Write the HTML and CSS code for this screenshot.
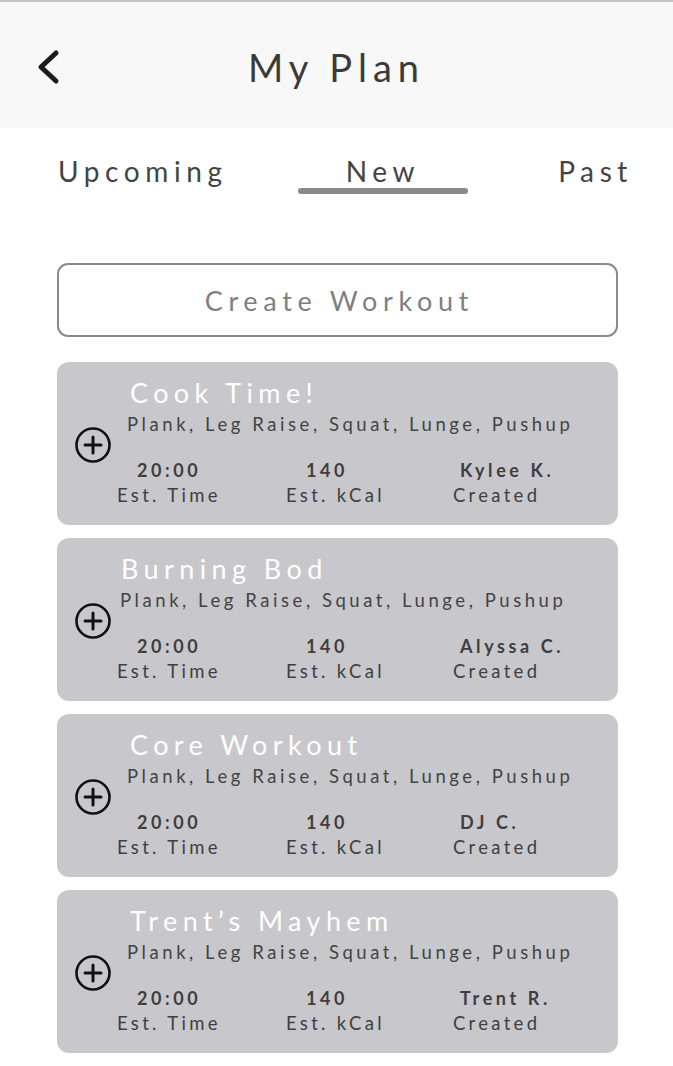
FILE: index.html
```html
<!DOCTYPE html>
<html lang="en">
<head>
<meta charset="utf-8">
<title>My Plan</title>
<link rel="stylesheet" href="styles.css">
</head>
<body>
<div class="app">
  <header class="topbar">
    <button class="back" aria-label="Back">
      <svg width="28" height="36" viewBox="0 0 28 36"><path d="M22 4 L7 18 L22 32" fill="none" stroke="#1c1c1c" stroke-width="5" stroke-linecap="round" stroke-linejoin="round"/></svg>
    </button>
    <h1 class="title">My Plan</h1>
  </header>

  <nav class="tabs">
    <div class="tab">Upcoming</div>
    <div class="tab tab-active">New</div>
    <div class="tab">Past</div>
  </nav>

  <main class="content">
    <button class="create">Create Workout</button>

    <div class="card">
      <svg class="plus" width="38" height="38" viewBox="0 0 38 38"><circle cx="19" cy="19" r="16.5" fill="none" stroke="#111" stroke-width="2.6"/><path d="M19 11 V27 M11 19 H27" stroke="#111" stroke-width="3" stroke-linecap="round"/></svg>
      <div class="card-body">
        <div class="card-title">Cook Time!</div>
        <div class="card-sub">Plank, Leg Raise, Squat, Lunge, Pushup</div>
        <div class="stats">
          <div class="stat"><div class="stat-val">20:00</div><div class="stat-lbl">Est. Time</div></div>
          <div class="stat"><div class="stat-val">140</div><div class="stat-lbl">Est. kCal</div></div>
          <div class="stat"><div class="stat-val">Kylee K.</div><div class="stat-lbl">Created</div></div>
        </div>
      </div>
    </div>

    <div class="card card-shift">
      <svg class="plus" width="38" height="38" viewBox="0 0 38 38"><circle cx="19" cy="19" r="16.5" fill="none" stroke="#111" stroke-width="2.6"/><path d="M19 11 V27 M11 19 H27" stroke="#111" stroke-width="3" stroke-linecap="round"/></svg>
      <div class="card-body">
        <div class="card-title">Burning Bod</div>
        <div class="card-sub">Plank, Leg Raise, Squat, Lunge, Pushup</div>
        <div class="stats">
          <div class="stat"><div class="stat-val">20:00</div><div class="stat-lbl">Est. Time</div></div>
          <div class="stat"><div class="stat-val">140</div><div class="stat-lbl">Est. kCal</div></div>
          <div class="stat"><div class="stat-val">Alyssa C.</div><div class="stat-lbl">Created</div></div>
        </div>
      </div>
    </div>

    <div class="card">
      <svg class="plus" width="38" height="38" viewBox="0 0 38 38"><circle cx="19" cy="19" r="16.5" fill="none" stroke="#111" stroke-width="2.6"/><path d="M19 11 V27 M11 19 H27" stroke="#111" stroke-width="3" stroke-linecap="round"/></svg>
      <div class="card-body">
        <div class="card-title">Core Workout</div>
        <div class="card-sub">Plank, Leg Raise, Squat, Lunge, Pushup</div>
        <div class="stats">
          <div class="stat"><div class="stat-val">20:00</div><div class="stat-lbl">Est. Time</div></div>
          <div class="stat"><div class="stat-val">140</div><div class="stat-lbl">Est. kCal</div></div>
          <div class="stat"><div class="stat-val">DJ C.</div><div class="stat-lbl">Created</div></div>
        </div>
      </div>
    </div>

    <div class="card">
      <svg class="plus" width="38" height="38" viewBox="0 0 38 38"><circle cx="19" cy="19" r="16.5" fill="none" stroke="#111" stroke-width="2.6"/><path d="M19 11 V27 M11 19 H27" stroke="#111" stroke-width="3" stroke-linecap="round"/></svg>
      <div class="card-body">
        <div class="card-title">Trent’s Mayhem</div>
        <div class="card-sub">Plank, Leg Raise, Squat, Lunge, Pushup</div>
        <div class="stats">
          <div class="stat"><div class="stat-val">20:00</div><div class="stat-lbl">Est. Time</div></div>
          <div class="stat"><div class="stat-val">140</div><div class="stat-lbl">Est. kCal</div></div>
          <div class="stat"><div class="stat-val">Trent R.</div><div class="stat-lbl">Created</div></div>
        </div>
      </div>
    </div>
  </main>
</div>
</body>
</html>
```

FILE: styles.css
```css
* { box-sizing: border-box; }
html, body { margin: 0; padding: 0; background: #ffffff; }
body { font-family: "Lato", "Noto Sans", sans-serif; color: #3c3c3c; }

.app { width: 673px; }

.topbar {
  height: 128px;
  background: #f8f8f8;
  border-top: 2px solid #c4c4c4;
  display: flex;
  align-items: center;
  justify-content: center;
  position: relative;
}
.back {
  position: absolute;
  left: 30px;
  top: 46px;
  border: 0;
  background: none;
  padding: 0;
  width: 36px;
  height: 38px;
  display: flex;
  align-items: center;
  justify-content: center;
}
.title {
  margin: 4px 0 0 0;
  padding-left: 0;
  font-weight: 400;
  font-size: 38px;
  letter-spacing: 6px;
  color: #3a3a3a;
  white-space: nowrap;
}

.tabs {
  display: grid;
  grid-template-columns: 170px 170px 1fr;
  column-gap: 70px;
  padding: 24px 40px 0 58px;
  height: 100px;
}
.tab {
  font-size: 28px;
  letter-spacing: 5.6px;
  color: #444;
  text-align: left;
  height: 46px;
  line-height: 38px;
  white-space: nowrap;
}
.tabs .tab:nth-child(2) { text-align: center; padding-left: 0; }
.tabs .tab:nth-child(3) { text-align: right; }
.tab-active {
  position: relative;
}
.tab-active::after {
  content: "";
  position: absolute;
  left: 0;
  right: 0;
  bottom: 4px;
  height: 6px;
  border-radius: 3px;
  background: #8a8a8a;
}

.content {
  padding: 35px 55px 0 57px;
  display: flex;
  flex-direction: column;
  gap: 13px;
}
.create {
  width: 561px;
  height: 74px;
  border: 2.5px solid #8a8a8a;
  border-radius: 11px;
  background: #fff;
  font-family: "Lato", "Noto Sans", sans-serif;
  font-size: 27px;
  letter-spacing: 5.7px;
  color: #7f7f7f;
  margin-bottom: 12px;
  padding: 0 0 0 4px;
  white-space: nowrap;
}

.card {
  width: 561px;
  height: 163px;
  background: #c8c7cc;
  border-radius: 12px;
  display: flex;
  align-items: flex-start;
  padding: 16px 0 0 17px;
}
.plus { flex: none; align-self: center; margin-top: -14px; }
.card-body {
  margin-left: 5px;
  flex: 1;
  display: flex;
  flex-direction: column;
  white-space: nowrap;
}
.card-title {
  margin-left: 13px;
  font-size: 27px;
  letter-spacing: 5.4px;
  color: #ffffff;
  line-height: 30px;
}
.card-sub {
  margin-left: 10px;
  margin-top: 4px;
  font-size: 18.5px;
  letter-spacing: 3.55px;
  color: #444;
  line-height: 24px;
}
.card-shift .card-title { margin-left: 4px; }
.card-shift .card-sub { margin-left: 3px; }

.stats {
  display: grid;
  grid-template-columns: 169px 167px 1fr;
  margin-top: 22px;
}
.stat { text-align: left; }
.stat-val {
  padding-left: 20px;
  font-weight: 700;
  font-size: 18px;
  letter-spacing: 3.6px;
  color: #3f3f3f;
  line-height: 24px;
}
.stat:nth-child(3) .stat-val { padding-left: 7px; }
.stat-lbl {
  margin-top: 1px;
  font-size: 18.5px;
  letter-spacing: 3.3px;
  color: #3f3f3f;
  line-height: 24px;
}
```
